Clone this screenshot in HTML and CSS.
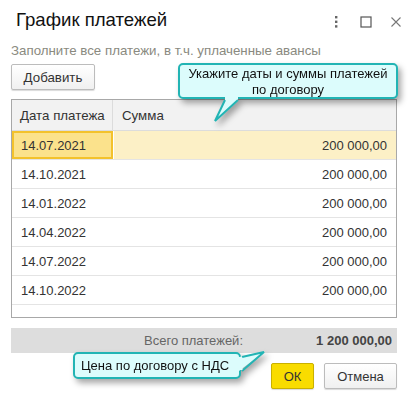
FILE: index.html
```html
<!DOCTYPE html>
<html lang="ru">
<head>
<meta charset="utf-8">
<title>График платежей</title>
<link rel="stylesheet" href="styles.css">
</head>
<body>
<div class="dialog">
  <div class="titlebar">
    <h1 class="title">График платежей</h1>
    <div class="win-icons">
      <svg class="ic" width="12" height="12" viewBox="0 0 12 12"><rect x="5" y="0" width="2.4" height="2.4" fill="#666"/><rect x="5" y="4.6" width="2.4" height="2.4" fill="#666"/><rect x="5" y="9.2" width="2.4" height="2.4" fill="#666"/></svg>
      <svg class="ic" width="12" height="12" viewBox="0 0 12 12"><rect x="1" y="1" width="10" height="10" fill="none" stroke="#555" stroke-width="1.2"/></svg>
      <svg class="ic" width="12" height="12" viewBox="0 0 12 12"><path d="M1.5 1.5 L10.5 10.5 M10.5 1.5 L1.5 10.5" stroke="#777" stroke-width="1.1" fill="none"/></svg>
    </div>
  </div>
  <div class="content">
    <p class="hint">Заполните все платежи, в т.ч. уплаченные авансы</p>
    <div class="toolbar">
      <button class="btn">Добавить</button>
    </div>
    <div class="table">
      <div class="row head">
        <div class="cell c-date">Дата платежа</div>
        <div class="cell c-sum">Сумма</div>
      </div>
      <div class="row selected">
        <div class="cell c-date">14.07.2021</div>
        <div class="cell c-sum num">200 000,00</div>
      </div>
      <div class="row">
        <div class="cell c-date">14.10.2021</div>
        <div class="cell c-sum num">200 000,00</div>
      </div>
      <div class="row">
        <div class="cell c-date">14.01.2022</div>
        <div class="cell c-sum num">200 000,00</div>
      </div>
      <div class="row">
        <div class="cell c-date">14.04.2022</div>
        <div class="cell c-sum num">200 000,00</div>
      </div>
      <div class="row">
        <div class="cell c-date">14.07.2022</div>
        <div class="cell c-sum num">200 000,00</div>
      </div>
      <div class="row">
        <div class="cell c-date">14.10.2022</div>
        <div class="cell c-sum num">200 000,00</div>
      </div>
      <div class="filler"></div>
    </div>
    <div class="total">
      <span class="total-label">Всего платежей:</span>
      <span class="total-value">1 200 000,00</span>
    </div>
    <div class="actions">
      <button class="btn btn-ok">ОК</button>
      <button class="btn btn-cancel">Отмена</button>
    </div>
  </div>

  <div class="tip tip-top">
    <div class="tip-box">Укажите даты и суммы платежей<br>по договору</div>
    <svg class="tail tail-top" width="30" height="30" viewBox="0 0 30 30">
      <polygon points="12,0 25,0 25,4 2,25 12,4" fill="#dcfcfc"/>
      <polyline points="12,3 2,24 25,3" fill="none" stroke="#22b4b4" stroke-width="2" stroke-linejoin="miter"/>
      <polygon points="13,0 24,0 23,2.2 13,2.2" fill="#dcfcfc"/>
    </svg>
  </div>

  <div class="tip tip-bottom">
    <div class="tip-box">Цена по договору с НДС</div>
    <svg class="tail tail-bottom" width="30" height="30" viewBox="0 0 30 30">
      <polygon points="0,6 25,1 0,20" fill="#dcfcfc"/>
      <polyline points="3,6 25,1 3,20" fill="none" stroke="#22b4b4" stroke-width="2"/>
      <polygon points="0,7 3.5,6.5 3.5,19 0,19" fill="#dcfcfc"/>
    </svg>
  </div>
</div>
</body>
</html>
```

FILE: styles.css
```css
* { box-sizing: border-box; }
html, body { margin: 0; padding: 0; background: #fff; }
body {
  font-family: "Liberation Sans", Arial, sans-serif;
  font-size: 13px;
  color: #333;
}
.dialog {
  position: relative;
  width: 417px;
  height: 400px;
  overflow: hidden;
}
.titlebar {
  display: flex;
  align-items: center;
  justify-content: space-between;
  padding: 8px 15px 0 16px;
  height: 31px;
}
.title {
  margin: 0;
  font-weight: normal;
  font-size: 18.6px;
  line-height: 23px;
  color: #111;
}
.win-icons {
  display: flex;
  gap: 18px;
  align-items: center;
  margin-top: 5px;
}
.ic { display: block; }
.content {
  padding: 0 20px 0 11px;
}
.hint {
  margin: 12px 0 0 0;
  font-size: 13.3px;
  line-height: 15px;
  color: #8a8a80;
  white-space: nowrap;
}
.toolbar {
  margin-top: 6px;
  height: 26px;
}
.btn {
  font-family: "Liberation Sans", Arial, sans-serif;
  font-size: 13px;
  color: #333;
  height: 26px;
  padding: 0 12px;
  border: 1px solid #bcbcbc;
  border-radius: 2px;
  background: linear-gradient(#ffffff, #f0f0f0);
  box-shadow: 0 1px 1px rgba(0,0,0,0.15);
}
.toolbar .btn { width: 84px; padding: 0; font-size: 13.3px; }
.table {
  margin-top: 9px;
  border: 1px solid #a8a8a8;
  height: 219px;
  background: #fff;
}
.row {
  display: flex;
  height: 29px;
  border-bottom: 1px solid #e4e4e4;
}
.row.head {
  height: 31px;
  background: #f2f2f2;
  border-bottom: 1px solid #dcdcdc;
}
.cell {
  display: flex;
  align-items: center;
  padding: 0 9px;
  color: #333;
  white-space: nowrap;
}
.c-date {
  width: 101px;
  flex-shrink: 0;
  border-right: 1px solid transparent;
}
.head .c-date { border-right: 1px solid #dcdcdc; padding: 0 0 0 8px; font-size: 13.3px; }
.head .c-sum { font-size: 13.3px; }
.c-sum { flex: 1; }
.num { justify-content: flex-end; }
.row.selected { background: #fcf0c6; }
.row.selected .c-date {
  background: #fbe28c;
  border: 2px solid #f3c22c;
  padding-left: 7px;
}
.row.selected .c-sum { border-left: 1px solid #fff; }
.filler { height: 12px; }
.total {
  margin-top: 10px;
  height: 25px;
  background: #dddddd;
  display: flex;
  align-items: center;
  padding: 0 5px 0 0;
}
.total-label {
  width: 232px;
  text-align: right;
  color: #666;
}
.total-value {
  flex: 1;
  text-align: right;
  font-weight: bold;
  color: #444;
}
.actions {
  display: flex;
  justify-content: flex-end;
  gap: 10px;
  margin-top: 10px;
}
.btn-ok {
  width: 43px;
  padding: 0;
  background: #f9dc00;
  border-color: #c9b000;
  color: #333;
}
.btn-cancel {
  width: 73px;
  padding: 0;
}
.tip {
  position: absolute;
  filter: drop-shadow(3px 4px 3px rgba(0,0,0,0.35));
}
.tip-box {
  position: relative;
  background: #dcfcfc;
  border: 2px solid #22b4b4;
  border-radius: 5px;
  color: #111;
  font-size: 13px;
  line-height: 16px;
  text-align: center;
}
.tip-top {
  left: 178px;
  top: 63px;
  width: 220px;
}
.tip-top .tip-box {
  height: 36px;
  padding-top: 1px;
}
.tip-bottom {
  left: 73px;
  top: 352px;
  width: 168px;
}
.tip-bottom .tip-box {
  height: 27px;
  padding-top: 4px;
  text-align: left;
  padding-left: 6px;
}
.tail { position: absolute; overflow: visible; }
.tail-top { left: 35px; top: 34px; }
.tail-bottom { left: 166px; top: -1px; }
```
